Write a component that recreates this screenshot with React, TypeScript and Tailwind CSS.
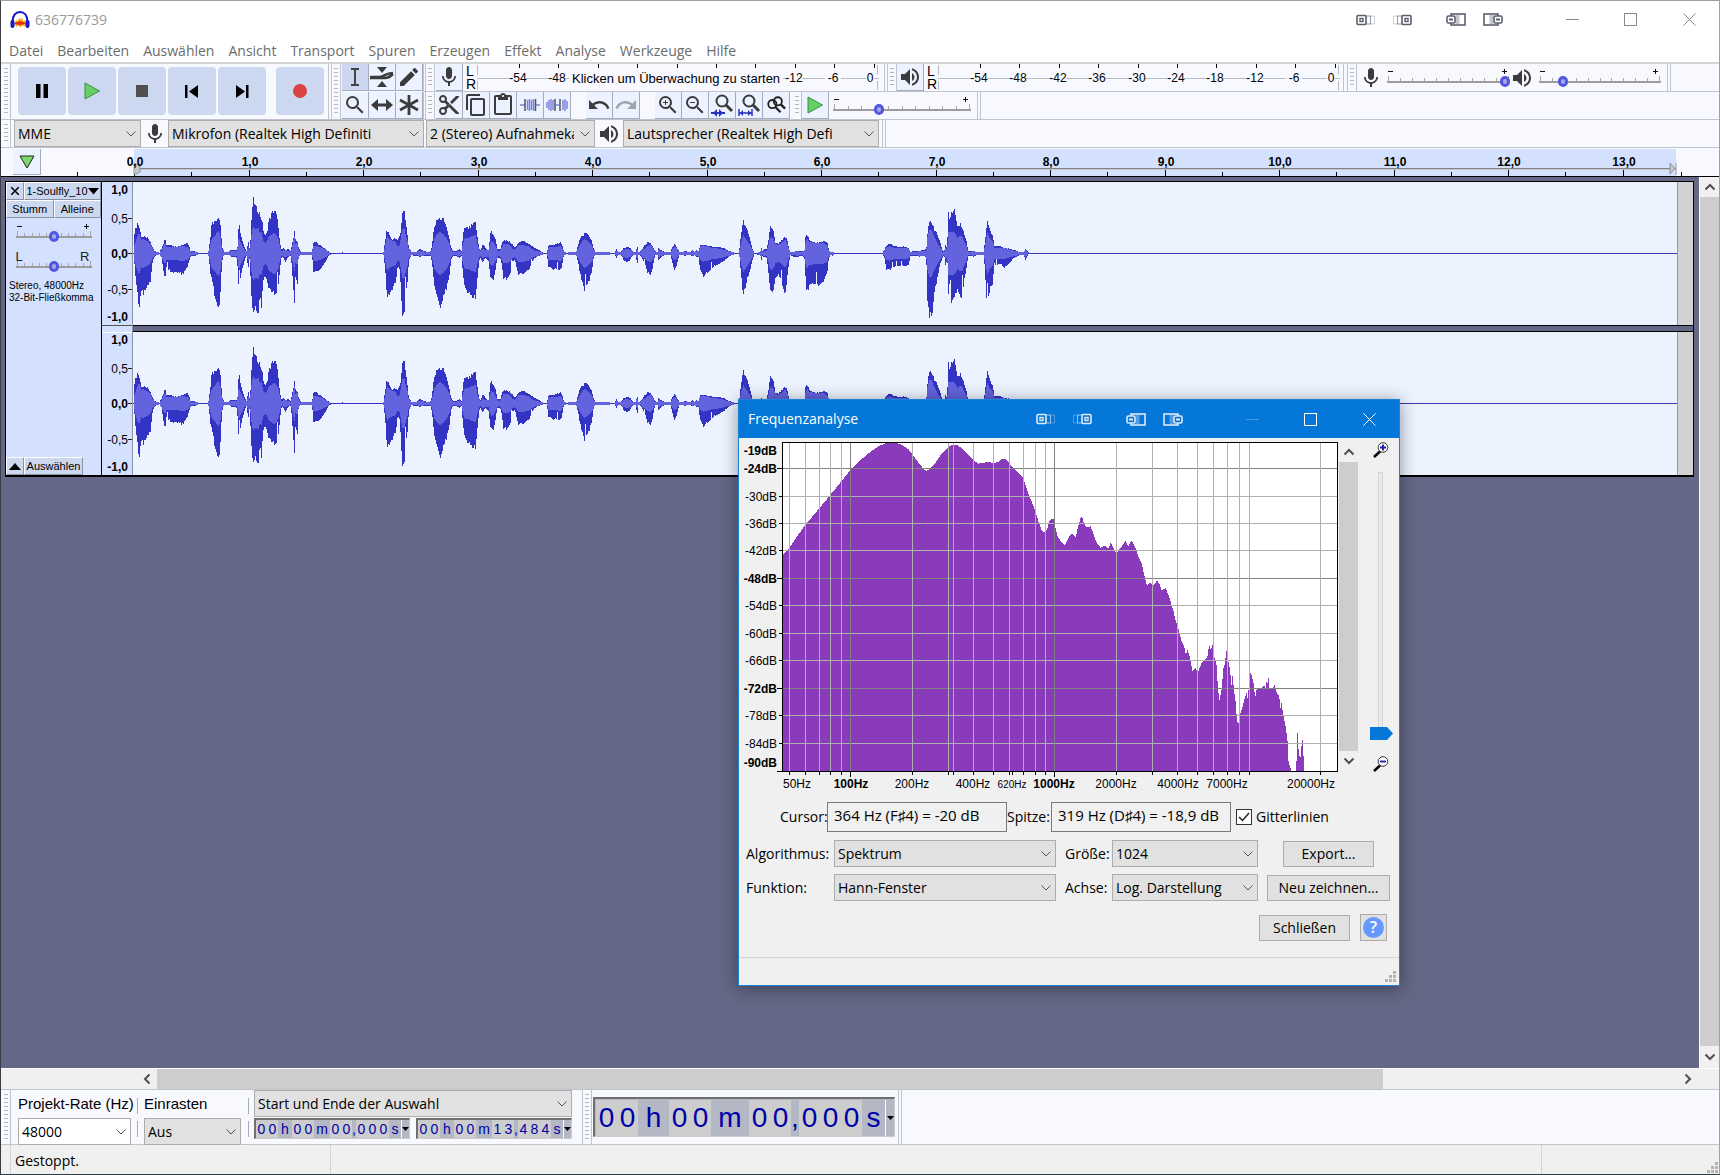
import type { ReactNode } from 'react';
import {
  MdContentCopy,
  MdContentCut,
  MdContentPaste,
  MdEdit,
  MdMic,
  MdRedo,
  MdSearch,
  MdUndo,
  MdVolumeUp,
  MdZoomIn,
  MdZoomOut,
} from 'react-icons/md';

type Point = [number, number];
type Peak = [number, number, number];

const MENUS = ['Datei', 'Bearbeiten', 'Auswählen', 'Ansicht', 'Transport', 'Spuren', 'Erzeugen', 'Effekt', 'Analyse', 'Werkzeuge', 'Hilfe'];

/* ---------- waveform ---------- */

const TICKS_PER_PX = 2.8;

// [tick, peak, trough], amplitudes in thirds of a pixel
const PEAKS: Peak[] = [
  [375, 60, 30], [380, 75, 90], [384, 90, 120], [388, 80, 160], [394, 50, 110], [400, 48, 120], [410, 45, 100], [420, 30, 80], [426, 15, 20], [432, 5, 5], [445, 1, 1],
  [451, 15, 10], [455, 25, 45], [461, 40, 80], [464, 25, 40], [475, 22, 50], [490, 18, 55], [500, 20, 55], [511, 25, 60], [524, 30, 35], [528, 20, 20], [532, 5, 8], [545, 5, 5], [555, 1, 1], [580, 1, 1],
  [583, 10, 10], [588, 50, 60], [592, 95, 80], [600, 90, 125], [605, 100, 140], [610, 108, 168], [615, 95, 130], [618, 50, 60], [622, 10, 10], [628, 2, 2], [640, 3, 3], [645, 10, 8], [660, 8, 8],
  [664, 20, 40], [667, 90, 105], [672, 60, 70], [678, 30, 40], [685, 12, 12], [690, 5, 5], [693, 40, 50], [697, 15, 15],
  [701, 50, 90], [704, 130, 150], [709, 160, 165], [715, 130, 150], [721, 128, 193], [727, 110, 120], [730, 105, 168], [733, 90, 110], [737, 60, 75], [741, 50, 70], [746, 60, 80], [750, 90, 100], [757, 110, 110], [766, 125, 118], [772, 115, 115], [778, 80, 90], [782, 30, 50], [787, 10, 10], [792, 15, 10], [797, 10, 25], [805, 12, 8], [812, 5, 5],
  [816, 25, 40], [823, 60, 150], [826, 40, 60], [831, 35, 100], [835, 15, 10], [840, 4, 4], [850, 2, 2], [860, 3, 3], [872, 2, 2],
  [876, 30, 52], [882, 33, 52], [895, 22, 45], [910, 12, 22], [920, 3, 3], [925, 1, 1], [955, 1, 1], [957, 4, 1], [959, 1, 1], [1072, 1, 1],
  [1074, 15, 15], [1078, 45, 60], [1082, 72, 130], [1088, 50, 125], [1097, 40, 105], [1105, 45, 90], [1112, 35, 40], [1117, 50, 45], [1120, 65, 90], [1125, 115, 185], [1131, 125, 170], [1135, 90, 110], [1140, 50, 80], [1143, 15, 20], [1150, 4, 4], [1165, 4, 5], [1175, 12, 8], [1185, 6, 6], [1195, 3, 5], [1205, 5, 5],
  [1210, 40, 40], [1215, 80, 100], [1222, 95, 130], [1230, 102, 162], [1240, 98, 130], [1248, 80, 105], [1255, 50, 80], [1262, 15, 15], [1268, 5, 5], [1275, 5, 5], [1285, 12, 12], [1291, 5, 5],
  [1295, 55, 70], [1300, 75, 100], [1310, 72, 115], [1320, 80, 125], [1330, 90, 130], [1336, 40, 60], [1342, 5, 8], [1350, 25, 25], [1358, 15, 10], [1366, 8, 20],
  [1373, 65, 78], [1380, 55, 78], [1387, 35, 40], [1392, 10, 10], [1400, 12, 15], [1403, 25, 30], [1408, 35, 73], [1418, 35, 75], [1427, 32, 60], [1433, 25, 20], [1440, 15, 20], [1450, 30, 60], [1465, 35, 58], [1480, 28, 45], [1490, 18, 20], [1500, 12, 8], [1508, 8, 5], [1515, 3, 3], [1520, 1, 1], [1530, 1, 1],
  [1534, 22, 40], [1552, 25, 45], [1560, 28, 45], [1567, 33, 50], [1573, 20, 30], [1577, 5, 5], [1585, 1, 1], [1600, 4, 4], [1612, 4, 4],
  [1618, 25, 30], [1620, 35, 45], [1628, 50, 80], [1634, 56, 108], [1640, 58, 100], [1648, 48, 80], [1656, 35, 50], [1660, 15, 15], [1665, 3, 3], [1720, 1, 1],
  [1725, 12, 12], [1729, 3, 3], [1740, 5, 5], [1745, 14, 20], [1757, 18, 25], [1765, 12, 12], [1772, 2, 2], [1780, 2, 2], [1782, 32, 52], [1785, 2, 2], [1795, 8, 8], [1802, 20, 25], [1812, 30, 55], [1820, 30, 60], [1826, 20, 40], [1832, 5, 5], [1839, 2, 2], [1842, 15, 18], [1848, 10, 10], [1860, 3, 3], [1876, 3, 3], [1880, 15, 20], [1888, 28, 52], [1895, 15, 25], [1900, 3, 3], [1918, 5, 5], [1928, 2, 2], [1938, 8, 8], [1943, 3, 3], [1948, 10, 8], [1955, 5, 8],
  [1958, 22, 45], [1968, 25, 65], [1980, 22, 55], [1995, 18, 38], [2010, 18, 32], [2025, 14, 20], [2040, 6, 8], [2050, 2, 2], [2055, 1, 1], [2068, 1, 1],
  [2070, 30, 20], [2074, 60, 70], [2080, 97, 123], [2086, 75, 100], [2092, 65, 70], [2100, 35, 45], [2106, 10, 15], [2110, 1, 1], [2127, 2, 2], [2130, 18, 22], [2133, 5, 5], [2138, 12, 10], [2145, 10, 10],
  [2150, 35, 55], [2154, 75, 105], [2160, 78, 112], [2166, 55, 100], [2170, 30, 75], [2178, 28, 65], [2185, 35, 80], [2190, 40, 100], [2196, 48, 117], [2202, 42, 80], [2207, 15, 30], [2211, 3, 3], [2220, 4, 8], [2235, 5, 8], [2245, 4, 5],
  [2251, 10, 15], [2255, 58, 95], [2259, 50, 115], [2265, 38, 92], [2280, 30, 92], [2292, 32, 90], [2305, 35, 80], [2315, 32, 55], [2319, 8, 10], [2325, 2, 3], [2331, 4, 5], [2335, 1, 1], [2470, 1, 1],
  [2475, 10, 12], [2480, 22, 45], [2490, 28, 48], [2500, 22, 40], [2515, 18, 38], [2530, 18, 35], [2542, 15, 35], [2548, 4, 5], [2560, 5, 5], [2575, 6, 8], [2585, 10, 5], [2592, 10, 10],
  [2595, 50, 140], [2600, 90, 187], [2608, 92, 185], [2615, 70, 120], [2622, 55, 75], [2630, 35, 35], [2638, 8, 10], [2642, 2, 2], [2647, 30, 40], [2650, 5, 10],
  [2654, 130, 120], [2657, 95, 160], [2662, 118, 145], [2670, 123, 130], [2675, 115, 115], [2680, 75, 100], [2686, 85, 125], [2692, 78, 130], [2698, 55, 80], [2705, 35, 40], [2709, 5, 5], [2725, 6, 8], [2737, 2, 2], [2752, 2, 2],
  [2756, 30, 40], [2760, 65, 120], [2764, 97, 155], [2770, 70, 100], [2778, 50, 90], [2783, 20, 30], [2790, 22, 30], [2800, 20, 30], [2810, 15, 40], [2825, 12, 25], [2840, 8, 10], [2855, 3, 3], [2866, 2, 2], [2869, 12, 22], [2872, 10, 12], [2877, 2, 1], [2880, 1, 1],
];

function noise(n: number) {
  const s = Math.sin(n * 12.9898) * 43758.5453;
  return s - Math.floor(s);
}

function buildWave(center: number) {
  let outer = '';
  let inner = '';
  let i = 0;
  const start = PEAKS[0][0];
  const end = PEAKS[PEAKS.length - 1][0];
  for (let x = 0; start + x * TICKS_PER_PX < end; x++) {
    const t = start + x * TICKS_PER_PX;
    while (i < PEAKS.length - 2 && PEAKS[i + 1][0] <= t) i++;
    const a = PEAKS[i];
    const b = PEAKS[i + 1];
    const f = (t - a[0]) / (b[0] - a[0]);
    const peak = (a[1] + (b[1] - a[1]) * f) / 3;
    const trough = (a[2] + (b[2] - a[2]) * f) / 3;
    const up = peak * (0.95 + noise(x) * 0.14);
    const gap = trough > 9 && noise(x + 7000) > 0.92 ? 0.55 : 1;
    const down = trough * (0.93 + noise(x + 3000) * 0.14) * gap;
    const rms = ((peak + trough) / 2) * 0.48 + 0.5;
    const px = x + 1.5;
    outer += `M${px} ${center - Math.round(up)}V${center + 1 + Math.round(down)}`;
    const iu = Math.round(Math.min(rms, up));
    const id = Math.round(Math.min(rms, down));
    if (iu + id > 1) inner += `M${px} ${center - iu}V${center + 1 + id}`;
  }
  return { outer, inner };
}

const WAVE = buildWave(71);

/* ---------- spectrum ---------- */

// thirds of a pixel inside the plot frame
const SPECTRUM: Point[] = [
  [143, 480], [165, 458], [187, 425], [212, 390], [250, 345], [287, 300], [318, 262], [345, 228], [370, 202], [400, 177], [430, 155], [455, 145], [480, 143], [500, 150], [520, 163], [533, 180], [550, 203], [570, 227], [577, 228], [590, 217], [603, 203], [620, 177], [640, 157], [655, 149], [668, 151], [685, 165], [700, 180], [717, 197], [730, 207], [745, 205], [760, 201], [775, 205], [790, 202], [800, 194], [808, 191], [817, 196], [825, 208], [840, 225], [855, 240], [865, 248], [872, 270], [880, 295], [890, 320], [900, 345], [910, 378], [920, 405], [928, 414], [936, 405], [944, 380], [950, 372], [957, 374], [962, 400], [968, 425], [978, 440],
  [990, 453], [1000, 430], [1010, 417], [1023, 427], [1030, 395], [1038, 368], [1042, 366], [1047, 385], [1055, 398], [1067, 395], [1075, 415], [1083, 440], [1098, 460], [1108, 452], [1120, 462], [1128, 444], [1138, 465], [1145, 478], [1155, 462], [1165, 450], [1172, 438], [1180, 455], [1190, 438], [1200, 455], [1210, 485], [1220, 505], [1228, 540], [1236, 572], [1245, 565], [1255, 572], [1267, 558], [1275, 570], [1280, 587], [1293, 580], [1302, 605], [1315, 645], [1323, 680], [1333, 710], [1340, 738], [1348, 755], [1353, 780], [1358, 765], [1367, 795], [1373, 830], [1382, 820], [1390, 832], [1400, 805], [1410, 795], [1417, 790], [1423, 750], [1428, 765], [1433, 750], [1438, 785], [1445, 810], [1450, 890], [1454, 915], [1460, 885], [1466, 820], [1471, 805], [1474, 762], [1478, 790], [1485, 820], [1490, 870], [1493, 845], [1498, 890], [1502, 920], [1506, 970], [1510, 993], [1514, 965], [1522, 940], [1530, 910], [1535, 895], [1539, 915], [1545, 830], [1550, 840], [1556, 865], [1561, 912], [1565, 885], [1580, 880], [1588, 870], [1592, 880], [1596, 857], [1598, 865], [1601, 850], [1604, 880], [1612, 885], [1619, 870], [1624, 890], [1633, 905], [1637, 940], [1640, 925], [1646, 965], [1653, 1000], [1658, 1040], [1661, 1100], [1667, 1120], [1670, 1130], [1682, 1130], [1685, 1100], [1688, 1015], [1692, 1080], [1698, 1090], [1702, 1020], [1706, 1085], [1708, 1130], [1720, 1130],
];

function buildSpectrum() {
  let d = '';
  let i = 0;
  for (let x = 0; x < 525; x++) {
    const t = 143 + x * 3;
    while (i < SPECTRUM.length - 2 && SPECTRUM[i + 1][0] <= t) i++;
    const a = SPECTRUM[i];
    const b = SPECTRUM[i + 1];
    const y = a[1] + ((b[1] - a[1]) * (t - a[0])) / (b[0] - a[0]);
    const top = Math.round((y - 142) / 3);
    if (top < 328) d += `M${x + 0.5} ${Math.max(top, 1)}V329`;
  }
  return d;
}

const SPECTRUM_PATH = buildSpectrum();

const DB_LINES = [
  { label: '-24dB', y: 26, major: true },
  { label: '-30dB', y: 54, major: false },
  { label: '-36dB', y: 81, major: false },
  { label: '-42dB', y: 108, major: false },
  { label: '-48dB', y: 136, major: true },
  { label: '-54dB', y: 163, major: false },
  { label: '-60dB', y: 191, major: false },
  { label: '-66dB', y: 218, major: false },
  { label: '-72dB', y: 246, major: true },
  { label: '-78dB', y: 273, major: false },
  { label: '-84dB', y: 301, major: false },
];
const HZ_LINES = [7, 23, 37, 48, 59, 68, 130, 166, 171, 191, 211, 227, 230, 241, 253, 263, 272, 334, 370, 395, 415, 431, 445, 457, 467, 538];
const HZ_LABELS = [
  { label: '50Hz', x: 15 },
  { label: '100Hz', x: 69, bold: true },
  { label: '200Hz', x: 130 },
  { label: '400Hz', x: 191 },
  { label: '620Hz', x: 230, small: true },
  { label: '1000Hz', x: 272, bold: true },
  { label: '2000Hz', x: 334 },
  { label: '4000Hz', x: 396 },
  { label: '7000Hz', x: 445 },
  { label: '20000Hz', x: 529 },
];

/* ---------- small parts ---------- */

function Grip({ className = '' }: { className?: string }) {
  return (
    <div className={`flex w-[10px] shrink-0 justify-center border-r border-[#c0c4cc] py-1 ${className}`}>
      <div className="w-1 bg-[repeating-linear-gradient(#b4b8c0_0_1px,transparent_1px_4px)]" />
    </div>
  );
}

function ToolButton({ label, active, children }: { label: string; active?: boolean; children: ReactNode }) {
  return (
    <button
      aria-label={label}
      className={`flex h-[27px] w-[27px] shrink-0 items-center justify-center border-r border-b border-[#a4abba] text-[#3c3c3c] ${active ? 'bg-[#ccd6f0]' : 'bg-[#ecf2ff]'}`}
    >
      {children}
    </button>
  );
}

function Chevron() {
  return (
    <svg width="10" height="6" viewBox="0 0 10 6" className="pointer-events-none absolute top-1/2 right-[5px] -mt-[3px]" fill="none" stroke="#555">
      <path d="M.5 .5 5 5 9.5 .5" />
    </svg>
  );
}

function Select({ label, value, id, className = '', tone = 'bg-[#e1e1e1]' }: { label?: string; value: string; id?: string; className?: string; tone?: string }) {
  return (
    <div className={`relative h-[27px] shrink-0 ${className}`}>
      <select id={id} aria-label={label} className={`h-full w-full appearance-none overflow-hidden border border-[#adadad] pr-5 pl-[3px] text-sm text-black ${tone}`}>
        <option>{value}</option>
      </select>
      <Chevron />
    </div>
  );
}

interface SliderProps {
  label: string;
  width: number;
  value: number;
  ends?: 'sign' | 'pan';
}

function Slider({ label, width, value, ends = 'sign' }: SliderProps) {
  const ticks = Array.from({ length: 11 }, (_, i) => Math.round(1 + (i * (width - 3)) / 10) + 0.5);
  return (
    <div className="relative h-[27px] shrink-0" style={{ width }}>
      <svg width={width} height="27" className="absolute inset-0" shapeRendering="crispEdges">
        <path d={ticks.map((x, i) => `M${x} ${i % 10 === 0 ? 12 : 14}V17`).join('')} stroke="#a8a8a8" />
        <path d={`M0 17.500H${width}`} stroke="#9c9c9c" strokeWidth="2" />
        {ends === 'sign' && <path d={`M1 7.500H6M${width - 8} 7.500h5M${width - 5.5} 5v5`} stroke="#111" />}
      </svg>
      {ends === 'pan' && (
        <div className="absolute inset-x-0 top-0 flex justify-between pr-[2px] text-[13px] leading-4 text-[#222]">
          <span>L</span>
          <span>R</span>
        </div>
      )}
      <input
        type="range"
        aria-label={label}
        defaultValue={value}
        className="absolute inset-x-0 top-3 h-[11px] w-full appearance-none bg-transparent [&::-webkit-slider-thumb]:h-[11px] [&::-webkit-slider-thumb]:w-[10px] [&::-webkit-slider-thumb]:appearance-none [&::-webkit-slider-thumb]:rounded-full [&::-webkit-slider-thumb]:border-[3px] [&::-webkit-slider-thumb]:border-[#5256e0] [&::-webkit-slider-thumb]:bg-[#a4a8e4]"
      />
    </div>
  );
}

function Meter({ text, from = 54 }: { text?: string; from?: number }) {
  const marks = Array.from({ length: 10 }, (_, i) => ({ x: Math.round(42 + i * 39.4), db: i * 6 - from }));
  const shown = marks.filter((m, i) => !text || i < 2 || i > 6);
  return (
    <svg width="402" height="27" className="shrink-0 font-['Liberation_Sans',sans-serif]" fontSize="12">
      <path d="M.5 1V11M.5 17V26M400.5 1V10M400.5 17V26M0 14.500H402" stroke="#b8bcc4" shapeRendering="crispEdges" />
      <path d={marks.map((m) => `M${m.x + 0.5} 0V4`).join('')} stroke="#000" shapeRendering="crispEdges" />
      {shown.map((m) => (
        <g key={m.db}>
          <rect x={m.db === 0 ? 389 : m.x - 9} y="8" width={m.db === 0 ? 8 : 16} height="12" fill="#f8f9ff" />
          <text x={m.db === 0 ? 393 : m.x - 1} y="18" textAnchor="middle">{m.db}</text>
        </g>
      ))}
      {text && (
        <>
          <rect x="92" y="8" width="214" height="12" fill="#f8f9ff" />
          <text x="95" y="19" fontSize="13">{text}</text>
        </>
      )}
    </svg>
  );
}

function LeftRight() {
  return (
    <div className="flex w-[14px] shrink-0 flex-col justify-center pl-[3px] font-['Liberation_Sans',sans-serif] text-sm leading-[13px]">
      <span>L</span>
      <span>R</span>
    </div>
  );
}

function PlayTriangle() {
  return (
    <svg width="18" height="18" viewBox="0 0 18 18">
      <path d="M2 1 16.500 9 2 17z" fill="#66d066" stroke="#3c9040" />
    </svg>
  );
}

function MonitorIcons({ light }: { light?: boolean }) {
  const stroke = light ? '#dfe9f5' : '#5c5f70';
  const fill = light ? '#0577d8' : '#fff';
  return (
    <div className="flex items-center">
      <svg width="20" height="12" viewBox="0 0 20 12" fill="none" stroke={stroke}>
        <path d="M14 2h4.500v8H14" opacity=".3" />
        <path d="M10 2h4.500v8H10" opacity=".65" />
        <rect x="1" y="1.500" width="9" height="9" rx="1" fill={fill} strokeWidth="1.600" />
        <rect x="4" y="4.500" width="3" height="3" strokeWidth="1.400" />
      </svg>
      <svg width="20" height="12" viewBox="0 0 20 12" className="ml-4" fill="none" stroke={stroke}>
        <path d="M6 2H1.500v8H6" opacity=".3" />
        <path d="M10 2H5.500v8H10" opacity=".65" />
        <rect x="10" y="1.500" width="9" height="9" rx="1" fill={fill} strokeWidth="1.600" />
        <rect x="13" y="4.500" width="3" height="3" strokeWidth="1.400" />
      </svg>
      <svg width="20" height="13" viewBox="0 0 20 13" className="ml-[34px]" fill={fill} stroke={stroke}>
        <rect x="5" y="1" width="14" height="11" strokeWidth="1.600" />
        <rect x="9.500" y="2" width="4" height="9" fill={stroke} stroke="none" opacity=".35" />
        <rect x="1" y="3" width="8" height="7" rx="1.500" strokeWidth="1.600" />
        <path d="M3 6.500h4" strokeWidth="2" />
      </svg>
      <svg width="20" height="13" viewBox="0 0 20 13" className="ml-[17px]" fill={fill} stroke={stroke}>
        <rect x="1" y="1" width="14" height="11" strokeWidth="1.600" />
        <rect x="6.500" y="2" width="4" height="9" fill={stroke} stroke="none" opacity=".35" />
        <rect x="11" y="3" width="8" height="7" rx="1.500" strokeWidth="1.600" />
        <path d="M13 6.500h4" strokeWidth="2" />
      </svg>
    </div>
  );
}

function WindowButtons({ light }: { light?: boolean }) {
  const stroke = light ? '#fff' : '#8a8a8a';
  return (
    <div className="flex">
      <button aria-label="Minimieren" className="flex w-[58px] items-center justify-center">
        <svg width="13" height="13" stroke={stroke} opacity={light ? 0.25 : 1}><path d="M0 6.500H13" /></svg>
      </button>
      <button aria-label="Maximieren" className="flex w-[58px] items-center justify-center">
        <svg width="13" height="13" stroke={stroke} fill="none"><rect x=".5" y=".5" width="12" height="12" /></svg>
      </button>
      <button aria-label="Fenster schließen" className="flex w-[60px] items-center justify-center">
        <svg width="13" height="13" stroke={stroke}><path d="M.5 .5 12.500 12.500M12.500 .5 .5 12.500" /></svg>
      </button>
    </div>
  );
}

function ScrollArrow({ d, label, className }: { d: string; label: string; className: string }) {
  return (
    <button aria-label={label} className={`flex shrink-0 items-center justify-center ${className}`}>
      <svg width="12" height="12" viewBox="0 0 12 12" fill="none" stroke="#505050" strokeWidth="2">
        <path d={d} />
      </svg>
    </button>
  );
}

const UP = 'M1.500 8.500 6 4l4.500 4.500';
const DOWN = 'M1.500 3.500 6 8l4.500-4.500';
const LEFT = 'M8.500 1.500 4 6l4.500 4.500';
const RIGHT = 'M3.500 1.500 8 6l-4.500 4.500';

/* ---------- header and toolbars ---------- */

function TitleBar() {
  return (
    <header className="flex h-[37px] items-center bg-white">
      <svg width="22" height="20" viewBox="0 0 22 20" className="ml-2">
        <path d="M3.500 12C3.500 5 7 2 11 2s7.500 3 7.500 10" fill="none" stroke="#1818c8" strokeWidth="2.200" />
        <path d="M5 14 7 10l1.500 1L10 8l1.500 1L13 8l1.500 3L16 10l1.500 4-2 2.500-2-1-2 2-2-2-2 1.500z" fill="#ffb020" />
        <path d="M5 13.500 8 12l3-1 3 1 3 1.500-3 1-3 .8-3-.8z" fill="#e03010" />
        <rect x="1.500" y="10" width="4" height="8" rx="2" fill="#1818c8" />
        <rect x="16.500" y="10" width="4" height="8" rx="2" fill="#1818c8" />
      </svg>
      <h1 className="ml-1 text-sm text-[#999]">636776739</h1>
      <div className="flex-1" />
      <MonitorIcons />
      <div className="w-10" />
      <WindowButtons />
    </header>
  );
}

function TransportToolbar() {
  const btn = 'flex h-12 w-12 items-center justify-center rounded-[4px] bg-[#ccd7f0]';
  return (
    <div className="flex gap-[2px] border-r border-[#c0c4cc] pt-[3px] pr-1 pl-[7px]">
      <button aria-label="Pause" className={btn}>
        <svg width="12" height="14"><path d="M0 0h4.500v14H0zM7.500 0H12v14H7.500z" /></svg>
      </button>
      <button aria-label="Wiedergabe" className={btn}><PlayTriangle /></button>
      <button aria-label="Stopp" className={btn}>
        <svg width="12" height="12"><rect width="12" height="12" fill="#505050" /></svg>
      </button>
      <button aria-label="Zum Anfang" className={btn}>
        <svg width="14" height="13"><path d="M0 0h2.500v13H0zM13 0v13L4 6.500z" /></svg>
      </button>
      <button aria-label="Zum Ende" className={btn}>
        <svg width="14" height="13"><path d="M11 0h2.500v13H11zM1 0v13l9-6.500z" /></svg>
      </button>
      <button aria-label="Aufnahme" className={`ml-2 ${btn}`}>
        <svg width="14" height="14"><circle cx="7" cy="7" r="7" fill="#d94343" /></svg>
      </button>
    </div>
  );
}

function ToolsToolbar() {
  return (
    <div className="grid grid-cols-3 content-start gap-y-px border-r border-[#c0c4cc] pl-px">
      <ToolButton label="Auswahlwerkzeug" active>
        <svg width="10" height="18" fill="none" stroke="#444" strokeWidth="2"><path d="M1 1h8M5 1v16M1 17h8" /></svg>
      </ToolButton>
      <ToolButton label="Hüllkurve">
        <svg width="24" height="22" viewBox="0 0 24 22" fill="#3c3c3c">
          <path d="M7 1h10l-5 6zM7 21h10l-5-6z" />
          <path d="M0 11h9c5 0 6-4 14-4M0 12h9c5 0 9 1 14-4" fill="none" stroke="#3c3c3c" strokeWidth="2.500" />
        </svg>
      </ToolButton>
      <ToolButton label="Zeichnen"><MdEdit size={24} /></ToolButton>
      <ToolButton label="Zoom"><MdSearch size={24} /></ToolButton>
      <ToolButton label="Verschieben">
        <svg width="22" height="14" fill="#3c3c3c"><path d="M0 7 7 1v4.500h8V1l7 6-7 6V8.500H7V13z" /></svg>
      </ToolButton>
      <ToolButton label="Multiwerkzeug">
        <svg width="20" height="20" stroke="#3c3c3c" strokeWidth="2.800"><path d="M10 0v20M1 5l18 10M19 5 1 15" /></svg>
      </ToolButton>
    </div>
  );
}

function EditToolbar() {
  return (
    <>
      <ToolButton label="Ausschneiden"><MdContentCut size={24} /></ToolButton>
      <ToolButton label="Kopieren"><MdContentCopy size={24} /></ToolButton>
      <ToolButton label="Einfügen"><MdContentPaste size={24} /></ToolButton>
      <ToolButton label="Trimmen">
        <svg width="20" height="16" fill="none" stroke="#7c84e0" strokeWidth="1.500">
          <path d="M0 8h5M15 8h5M7.500 3v10M9.500 2v12M11.500 3v10M13.500 2v12" />
          <path d="M5 2v12M15.500 2v12" stroke="#555" />
        </svg>
      </ToolButton>
      <ToolButton label="Stille">
        <svg width="22" height="16" fill="none" stroke="#7c84e0" strokeWidth="1.500">
          <path d="M1 5v6M3 3v10M5 2v12M7 3v10M9 8h4M17 3v10M19 2v12M21 4v8" />
          <path d="M9 2v12M14 2v12" stroke="#555" />
        </svg>
      </ToolButton>
      <div className="w-[15px] shrink-0" />
      <ToolButton label="Rückgängig"><MdUndo size={24} /></ToolButton>
      <ToolButton label="Wiederholen"><MdRedo size={24} color="#a0a4ac" /></ToolButton>
      <div className="w-[15px] shrink-0" />
      <ToolButton label="Vergrößern"><MdZoomIn size={24} /></ToolButton>
      <ToolButton label="Verkleinern"><MdZoomOut size={24} /></ToolButton>
      <ToolButton label="Auswahl einpassen">
        <svg width="24" height="24" viewBox="0 0 24 24" fill="none" stroke="#3c3c3c" strokeWidth="2">
          <circle cx="12" cy="8" r="5.500" /><path d="m16 12 6 6" strokeWidth="3" />
          <path d="M1 20h14" stroke="#2830c0" /><path d="m7 16-4 4 4 4zM9 16l4 4-4 4z" fill="#2830c0" stroke="none" />
        </svg>
      </ToolButton>
      <ToolButton label="Projekt einpassen">
        <svg width="24" height="24" viewBox="0 0 24 24" fill="none" stroke="#3c3c3c" strokeWidth="2">
          <circle cx="12" cy="8" r="5.500" /><path d="m16 12 6 6" strokeWidth="3" />
          <path d="M2 16v7M15 16v7M2 20h13" stroke="#2830c0" strokeWidth="1.500" /><path d="m6 17-3 3 3 3zM11 17l3 3-3 3z" fill="#2830c0" stroke="none" />
        </svg>
      </ToolButton>
      <ToolButton label="Zoom umschalten">
        <svg width="20" height="20" viewBox="0 0 22 22" fill="none" stroke="#222" strokeWidth="2">
          <circle cx="13" cy="7" r="4.500" /><circle cx="7" cy="10" r="4.500" /><path d="m16 10 5 5M10 13l6 6" strokeWidth="2.500" />
        </svg>
      </ToolButton>
    </>
  );
}

function Toolbars() {
  return (
    <section className="bg-[#f8f9ff]">
      <div className="flex">
        <div className="flex border-b border-[#c0c4cc]">
          <Grip />
          <TransportToolbar />
          <Grip className="ml-[2px] border-l" />
          <ToolsToolbar />
        </div>
        <div className="min-w-0 flex-1">
          <div className="flex h-7 border-b border-[#c0c4cc]">
            <Grip className="ml-px border-l" />
            <div className="w-px shrink-0" />
            <ToolButton label="Aufnahmepegel"><MdMic size={24} /></ToolButton>
            <LeftRight />
            <Meter text="Klicken um Überwachung zu starten" />
            <div className="w-[6px] shrink-0 border-r border-[#c0c4cc]" />
            <Grip className="ml-[2px] border-l" />
            <ToolButton label="Wiedergabepegel"><MdVolumeUp size={24} /></ToolButton>
            <LeftRight />
            <Meter />
            <div className="w-1 shrink-0 border-r border-[#c0c4cc]" />
            <Grip className="ml-[3px] border-l" />
            <div className="flex items-center pr-1 pl-[2px] text-[#3c3c3c]"><MdMic size={24} /></div>
            <Slider label="Aufnahmelautstärke" width={123} value={100} />
            <div className="flex items-center pr-[5px] text-[#3c3c3c]"><MdVolumeUp size={24} /></div>
            <Slider label="Wiedergabelautstärke" width={122} value={17} />
            <div className="ml-[6px] w-1 shrink-0 border-x border-[#c0c4cc]" />
          </div>
          <div className="flex h-7 border-b border-[#c0c4cc]">
            <Grip className="ml-px border-l" />
            <div className="w-px shrink-0" />
            <EditToolbar />
            <Grip className="ml-[2px]" />
            <ToolButton label="Mit Geschwindigkeit abspielen"><PlayTriangle /></ToolButton>
            <div className="ml-1"><Slider label="Wiedergabegeschwindigkeit" width={138} value={32} /></div>
            <div className="ml-[6px] w-1 shrink-0 border-x border-[#c0c4cc]" />
          </div>
        </div>
      </div>
      <div className="flex h-7 border-b border-[#c0c4cc]">
        <Grip />
        <Select label="Audio-Host" value="MME" className="ml-[3px] w-[127px]" />
        <div className="flex w-[27px] items-center justify-center text-[#3c3c3c]"><MdMic size={24} /></div>
        <Select label="Aufnahmegerät" value="Mikrofon (Realtek High Definiti" className="w-[256px]" />
        <Select label="Aufnahmekanäle" value="2 (Stereo) Aufnahmekanäle" className="ml-[2px] w-[169px]" />
        <div className="flex w-7 items-center justify-center text-[#3c3c3c]"><MdVolumeUp size={24} /></div>
        <Select label="Wiedergabegerät" value="Lautsprecher (Realtek High Defi" className="w-[256px]" />
        <div className="ml-[3px] w-1 border-x border-[#c0c4cc]" />
      </div>
    </section>
  );
}

function TimeRuler() {
  const px = (s: number) => Math.round(133 + s * 114.5);
  const halves = Array.from({ length: 28 }, (_, i) => (i - 1) / 2);
  return (
    <div className="relative flex h-[29px] border-b border-black bg-[#f8f9ff]">
      <svg width="100%" height="28" className="absolute inset-0 font-['Liberation_Sans',sans-serif]" fontSize="12" fontWeight="bold">
        <rect x="133" y="1" width="1542" height="27" fill="#d4e1fe" />
        <g shapeRendering="crispEdges">
          <path d="M133 20.500H1675" stroke="#808488" />
          <path d="M133 21.500H1675" stroke="#c4c8cc" />
          <path d={halves.map((s) => `M${px(s) + 0.5} ${s % 1 === 0 ? 22 : 24}V28`).join('') + 'M1680.500 24V28'} stroke="#000" />
        </g>
        <path d="M133 15v12l6-3V18z" fill="#c4c8cc" stroke="#808488" strokeWidth=".8" />
        <path d="M1669 15v11l5-5.500zM1675 15v12" fill="#c4c8cc" stroke="#808488" strokeWidth=".8" />
        {Array.from({ length: 14 }, (_, s) => (
          <text key={s} x={px(s) + 1} y="18" textAnchor="middle">{s},0</text>
        ))}
      </svg>
      <button aria-label="Zeitleistenoptionen" className="relative mt-px ml-3 flex h-[26px] w-7 items-center justify-center border-r border-b border-[#a4abba] bg-[#ecf2ff]">
        <svg width="16" height="14"><path d="M1 1h14L8 13z" fill="#7fd66a" stroke="#222" /></svg>
      </button>
    </div>
  );
}

/* ---------- track ---------- */

function TrackPanel() {
  const btn = 'flex items-center justify-center border-t border-l border-r border-b border-t-white border-l-white border-r-[#8a92a4] border-b-[#8a92a4] bg-[#ccd7f0]';
  return (
    <div className="flex w-24 shrink-0 flex-col border-r border-black bg-[#d4e1fe] text-[11px] leading-3">
      <div className="flex h-[18px]">
        <button aria-label="Spur schließen" className={`w-[18px] ${btn}`}>
          <svg width="8" height="8" stroke="#000" strokeWidth="1.500"><path d="M0 0 8 8M8 0 0 8" /></svg>
        </button>
        <button className={`min-w-0 flex-1 ${btn}`}>
          1-Soulfly_10
          <svg width="11" height="7" className="shrink-0"><path d="M0 0h11L5.500 6.500z" /></svg>
        </button>
      </div>
      <div className="flex h-[18px]">
        <button className={`flex-1 ${btn}`}>Stumm</button>
        <button className={`flex-1 ${btn}`}>Alleine</button>
      </div>
      <div className="mt-px flex flex-col items-center gap-[3px]">
        <Slider label="Verstärkung" width={76} value={50} />
        <Slider label="Panorama" width={76} value={50} ends="pan" />
      </div>
      <p className="mt-1 ml-[3px] text-[10px] whitespace-nowrap">
        Stereo, 48000Hz
        <br />
        32-Bit-Fließkomma
      </p>
      <div className="mt-auto flex h-[18px]">
        <button aria-label="Spur einklappen" className={`w-[18px] ${btn}`}>
          <svg width="12" height="7"><path d="M0 7h12L6 0z" /></svg>
        </button>
        <button className={`w-[59px] ${btn}`}>Auswählen</button>
      </div>
    </div>
  );
}

function ScaleRuler() {
  const labels = [
    { text: '1,0', y: 12, bold: true },
    { text: '0,5', y: 41 },
    { text: '0,0', y: 76, bold: true },
    { text: '-0,5', y: 112 },
    { text: '-1,0', y: 139, bold: true },
  ];
  return (
    <svg width="31" height="293" fontSize="12" className="shrink-0 border-r border-[#8a92a4] bg-[#d4e1fe]">
      {[0, 150].map((top) => (
        <g key={top}>
          {labels.map((l) => (
            <text key={l.text} x="26" y={top + l.y} textAnchor="end" fontWeight={l.bold ? 'bold' : 'normal'}>{l.text}</text>
          ))}
          <path d={`M26 ${top + 36.5}h5M26 ${top + 71.5}h5M26 ${top + 107.5}h5`} stroke="#222" shapeRendering="crispEdges" />
        </g>
      ))}
      <path d="M0 143.500H31" stroke="#555" shapeRendering="crispEdges" />
      <path d="M0 150.500H31" stroke="#fff" shapeRendering="crispEdges" />
    </svg>
  );
}

function Channel({ className = '' }: { className?: string }) {
  return (
    <div className={`flex h-36 border-black ${className}`}>
      <div className="min-w-0 flex-1 overflow-hidden bg-[#ecf3ff]">
        <svg width="100%" height="143" shapeRendering="crispEdges" fill="none">
          <path d="M0 71.500H4000" stroke="#3c3cb0" />
          <path d={WAVE.outer} stroke="#3333c4" />
          <path d={WAVE.inner} stroke="#6363dd" />
        </svg>
      </div>
      <div className="w-4 border-l border-[#999] bg-[#d2d2d2]" />
    </div>
  );
}

function Workspace() {
  return (
    <main className="flex min-h-0 flex-1">
      <div className="min-w-0 flex-1 bg-[#646785] pt-1 pr-[5px] pl-1">
        <div className="flex border border-b-2 border-black bg-[#646785] font-['Liberation_Sans',sans-serif]">
          <TrackPanel />
          <ScaleRuler />
          <div className="flex min-w-0 flex-1 flex-col justify-between">
            <Channel className="border-b" />
            <Channel className="border-t" />
          </div>
        </div>
      </div>
      <div className="flex w-5 flex-col border-l border-white bg-[#f0f0f0]">
        <ScrollArrow d={UP} label="Nach oben" className="h-5" />
        <div className="flex-1 bg-[#cdcdcd]" />
        <ScrollArrow d={DOWN} label="Nach unten" className="h-[22px]" />
      </div>
    </main>
  );
}

/* ---------- frequency dialog ---------- */

function SpectrumPlot() {
  return (
    <svg width="600" height="355" fontSize="12" className="shrink-0 font-['Liberation_Sans',sans-serif]">
      <g transform="translate(43 4)">
        <rect x="0" y="0" width="556" height="330" fill="#fff" />
        <g shapeRendering="crispEdges">
          <path d={SPECTRUM_PATH} stroke="#8a3bbb" />
          {DB_LINES.map((l) => (
            <path key={l.label} d={`M0 ${l.y + 0.5}H555`} stroke={l.major ? '#808080' : '#b0b0b0'} />
          ))}
          {HZ_LINES.filter((x) => x !== 230).map((x) => (
            <path key={x} d={`M${x + 0.5} 0V329`} stroke={x === 68 || x === 272 ? '#808080' : '#b0b0b0'} />
          ))}
          <rect x=".5" y=".5" width="555" height="329" fill="none" stroke="#000" />
          <path d={DB_LINES.map((l) => `M${l.major ? -5 : -3} ${l.y + 0.5}H0`).join('') + 'M-5 329.500H0'} stroke="#000" />
          <path d={HZ_LINES.map((x) => `M${x + 0.5} 330v${x === 68 || x === 272 ? 5 : 3}`).join('')} stroke="#000" />
        </g>
        <text x="-5" y="13" textAnchor="end" fontWeight="bold">-19dB</text>
        {DB_LINES.map((l) => (
          <text key={l.label} x="-5" y={l.y + 5} textAnchor="end" fontWeight={l.major ? 'bold' : 'normal'}>{l.label}</text>
        ))}
        <text x="-5" y="325" textAnchor="end" fontWeight="bold">-90dB</text>
        {HZ_LABELS.map((l) => (
          <text key={l.label} x={l.x} y="346" textAnchor="middle" fontSize={l.small ? 10 : 12} fontWeight={l.bold ? 'bold' : 'normal'}>{l.label}</text>
        ))}
      </g>
    </svg>
  );
}

function LensIcon({ plus }: { plus?: boolean }) {
  return (
    <svg width="16" height="16" viewBox="0 0 16 16" fill="none">
      <path d="M1 15 7 9.500" stroke="#000" strokeWidth="2.500" />
      <circle cx="10" cy="5.500" r="4.800" stroke="#333" fill="#fff" />
      <path d={plus ? 'M7 5.500h6M10 2.500v6' : 'M7 5.500h6'} stroke="#1818a8" strokeWidth="1.800" />
    </svg>
  );
}

function FrequencyDialog() {
  const button = 'h-[26px] border border-[#adadad] bg-[#e1e1e1]';
  const field = 'h-[30px] w-[180px] border border-[#7a7a7a] bg-[#f0f0f0] px-[6px] pb-1 text-[15px]';
  return (
    <section
      role="dialog"
      aria-label="Frequenzanalyse"
      className="absolute top-[398px] left-[737px] flex w-[662px] flex-col border border-[#1883d7] bg-[#f0f0f0] text-sm shadow-[0_2px_16px_rgba(0,0,0,0.4)]"
    >
      <div className="flex h-[38px] items-center bg-[#0577d8] text-white">
        <h2 className="flex-1 pl-[9px]">Frequenzanalyse</h2>
        <MonitorIcons light />
        <div className="w-10" />
        <WindowButtons light />
      </div>

      <div className="flex">
        <SpectrumPlot />
        <div className="mt-1 flex h-[329px] w-[19px] flex-col">
          <ScrollArrow d={UP} label="Nach oben" className="h-5" />
          <div className="flex-1 bg-[#cdcdcd]" />
          <ScrollArrow d={DOWN} label="Nach unten" className="h-5" />
        </div>
        <div className="flex h-[342px] flex-1 flex-col items-center pt-1 pb-2 pl-1">
          <LensIcon plus />
          <div className="relative mt-[14px] flex w-6 flex-1 justify-center">
            <div className="mb-4 w-[5px] border border-[#d6d6d6] bg-[#e7eaea]" />
            <svg width="23" height="13" className="absolute bottom-4 left-px"><path d="M0 0h17l6 6.500L17 13H0z" fill="#0577d8" /></svg>
          </div>
          <LensIcon />
        </div>
      </div>

      <div className="mt-[9px] flex h-[30px] items-center pl-[41px]">
        <label htmlFor="cursor" className="w-[47px]">Cursor:</label>
        <input id="cursor" readOnly value="364 Hz (F♯4) = -20 dB" className={field} />
        <label htmlFor="peak" className="w-11">Spitze:</label>
        <input id="peak" readOnly value="319 Hz (D♯4) = -18,9 dB" className={field} />
        <label className="ml-[5px] flex items-center gap-1">
          <span className="relative h-4 w-4">
            <input type="checkbox" defaultChecked className="block h-4 w-4 appearance-none border border-[#333] bg-white" />
            <svg width="12" height="10" className="pointer-events-none absolute top-[3px] left-[2px]" fill="none" stroke="#222" strokeWidth="1.500"><path d="m1 5 3.500 3.500L11 1" /></svg>
          </span>
          Gitterlinien
        </label>
      </div>

      <div className="mt-2 grid grid-cols-[88px_222px_9px_47px_146px_1fr] items-center gap-y-[7px] pl-[7px]">
        <label htmlFor="algo">Algorithmus:</label>
        <Select id="algo" value="Spektrum" />
        <span />
        <label htmlFor="size">Größe:</label>
        <Select id="size" value="1024" />
        <button className={`mx-auto w-[91px] ${button}`}>Export...</button>
        <label htmlFor="func">Funktion:</label>
        <Select id="func" value="Hann-Fenster" />
        <span />
        <label htmlFor="axis">Achse:</label>
        <Select id="axis" value="Log. Darstellung" />
        <button className={`mx-auto w-[123px] ${button}`}>Neu zeichnen...</button>
      </div>

      <div className="mt-[13px] flex items-center justify-end gap-[10px] pr-3">
        <button className={`w-[91px] ${button}`}>Schließen</button>
        <button aria-label="Hilfe" className="flex h-[27px] w-[27px] items-center justify-center border border-[#adadad] bg-[#e1e1e1]">
          <span className="h-[21px] w-[21px] rounded-full bg-[#6699ff] text-base leading-[21px] font-semibold text-white">?</span>
        </button>
      </div>

      <div className="mt-4 flex h-7 items-end justify-end border-t border-[#d4d4d4] p-[2px]"><ResizeDots /></div>
    </section>
  );
}

function ResizeDots() {
  return (
    <svg width="12" height="12" fill="#b4b4b4">
      <path d="M8 0h3v3H8zM4 4h3v3H4zM8 4h3v3H8zM0 8h3v3H0zM4 8h3v3H4zM8 8h3v3H8z" />
    </svg>
  );
}

/* ---------- bottom bars ---------- */

function TimeField({ label, digits, big }: { label: string; digits: string; big?: boolean }) {
  // digits arrive as hhmmss plus milliseconds
  const d = (from: number, to: number) =>
    digits.slice(from, to).split('').map((c, i) => (
      <span key={i} className={`flex items-center justify-center bg-[#cdcdcd] ${big ? 'w-[21px]' : 'w-[11px]'}`}>{c}</span>
    ));
  const unit = (text: string, small: string, large: string) => (
    <span className={`flex items-center justify-center ${big ? large : small}`}>{text}</span>
  );
  return (
    <div
      role="group"
      aria-label={label}
      className={`flex border-t-2 border-l-2 border-r border-b border-t-[#707070] border-l-[#707070] border-r-[#ccc] border-b-[#ccc] bg-[#b4b8c4] text-[#0000a8] ${big ? 'h-10 w-[302px] pt-px pl-px text-[28px] leading-none' : 'h-[21px] w-[156px] text-sm leading-none'}`}
    >
      {d(0, 2)}
      {unit('h', 'w-[14px]', 'w-[31px]')}
      {d(2, 4)}
      {unit('m', 'w-4', 'w-[38px]')}
      {d(4, 6)}
      {unit(',', 'w-1', 'w-2')}
      {d(6, 9)}
      {unit('s', 'w-3', 'w-[23px]')}
      <button aria-label="Format" className="flex flex-1 items-center justify-center border-l border-white">
        <svg width="7" height="4" className="shrink-0"><path d="M0 0h7L3.500 4z" /></svg>
      </button>
    </div>
  );
}

function BottomBars() {
  return (
    <footer className="bg-[#f8f9ff]">
      <div className="flex h-[21px] border-t border-white bg-[#f0f0f0] pr-5">
        <div className="w-[136px]" />
        <ScrollArrow d={LEFT} label="Nach links" className="w-5" />
        <div className="w-[1226px] bg-[#cdcdcd]" />
        <div className="flex-1" />
        <ScrollArrow d={RIGHT} label="Nach rechts" className="w-[22px]" />
      </div>

      <div className="flex h-14 border-y border-[#c0c4cc] font-['Liberation_Sans',sans-serif]">
        <Grip />
        <div className="flex w-[126px] flex-col border-[#c0c4cc] pl-[7px] text-[15px]">
          <label htmlFor="rate" className="h-7 leading-7 whitespace-nowrap">Projekt-Rate (Hz)</label>
          <Select id="rate" value="48000" tone="bg-white font-['Open_Sans',sans-serif]" className="w-[113px]" />
        </div>
        <div className="flex flex-col justify-around py-1">
          <i className="h-4 w-px bg-[#a8acb8]" />
          <i className="h-4 w-px bg-[#a8acb8]" />
        </div>
        <div className="flex w-[110px] flex-col pl-[6px] text-[15px]">
          <label htmlFor="snap" className="h-7 leading-7">Einrasten</label>
          <Select id="snap" value="Aus" tone="bg-[#e1e1e1] font-['Open_Sans',sans-serif]" className="w-[97px]" />
        </div>
        <div className="flex flex-col justify-around py-1">
          <i className="h-4 w-px bg-[#a8acb8]" />
          <i className="h-4 w-px bg-[#a8acb8]" />
        </div>
        <div className="ml-[5px] flex w-[318px] flex-col gap-px">
          <Select label="Auswahlmodus" value="Start und Ende der Auswahl" tone="bg-[#e1e1e1] font-['Open_Sans',sans-serif]" />
          <div className="flex justify-between">
            <TimeField label="Auswahl Start" digits="000000000" />
            <TimeField label="Auswahl Ende" digits="000013484" />
          </div>
        </div>
        <Grip className="ml-[10px] border-l" />
        <div className="flex items-center pr-[3px] pl-px">
          <TimeField label="Audioposition" digits="000000000" big />
        </div>
        <div className="w-1 border-x border-[#c0c4cc]" />
      </div>

      <div className="flex h-[29px] items-stretch bg-[#f0f0f0] text-sm">
        <div className="w-[10px] border-r border-[#d4d4d4]" />
        <span className="flex w-[320px] items-center border-r border-[#d4d4d4] pt-[3px] pl-1">Gestoppt.</span>
        <div className="flex-1" />
        <div className="flex w-[178px] items-end justify-end border-l border-[#d4d4d4]"><ResizeDots /></div>
      </div>
    </footer>
  );
}

export default function App() {
  return (
    <div className="relative flex h-screen flex-col overflow-hidden border-t border-r border-b border-l border-t-[#a0a0a0] border-r-[#a0a0a0] border-b-[#333c40] border-l-[#3c3c44] bg-white font-['Open_Sans','Noto_Sans',sans-serif] text-black">
      <TitleBar />
      <nav className="flex h-[26px] items-center gap-[14px] border-b-2 border-[#d4d4d4] pt-[2px] pl-2 text-sm text-[#6c6c6c]">
        {MENUS.map((menu) => (
          <button key={menu}>{menu}</button>
        ))}
      </nav>
      <Toolbars />
      <TimeRuler />
      <Workspace />
      <BottomBars />
      <FrequencyDialog />
    </div>
  );
}
